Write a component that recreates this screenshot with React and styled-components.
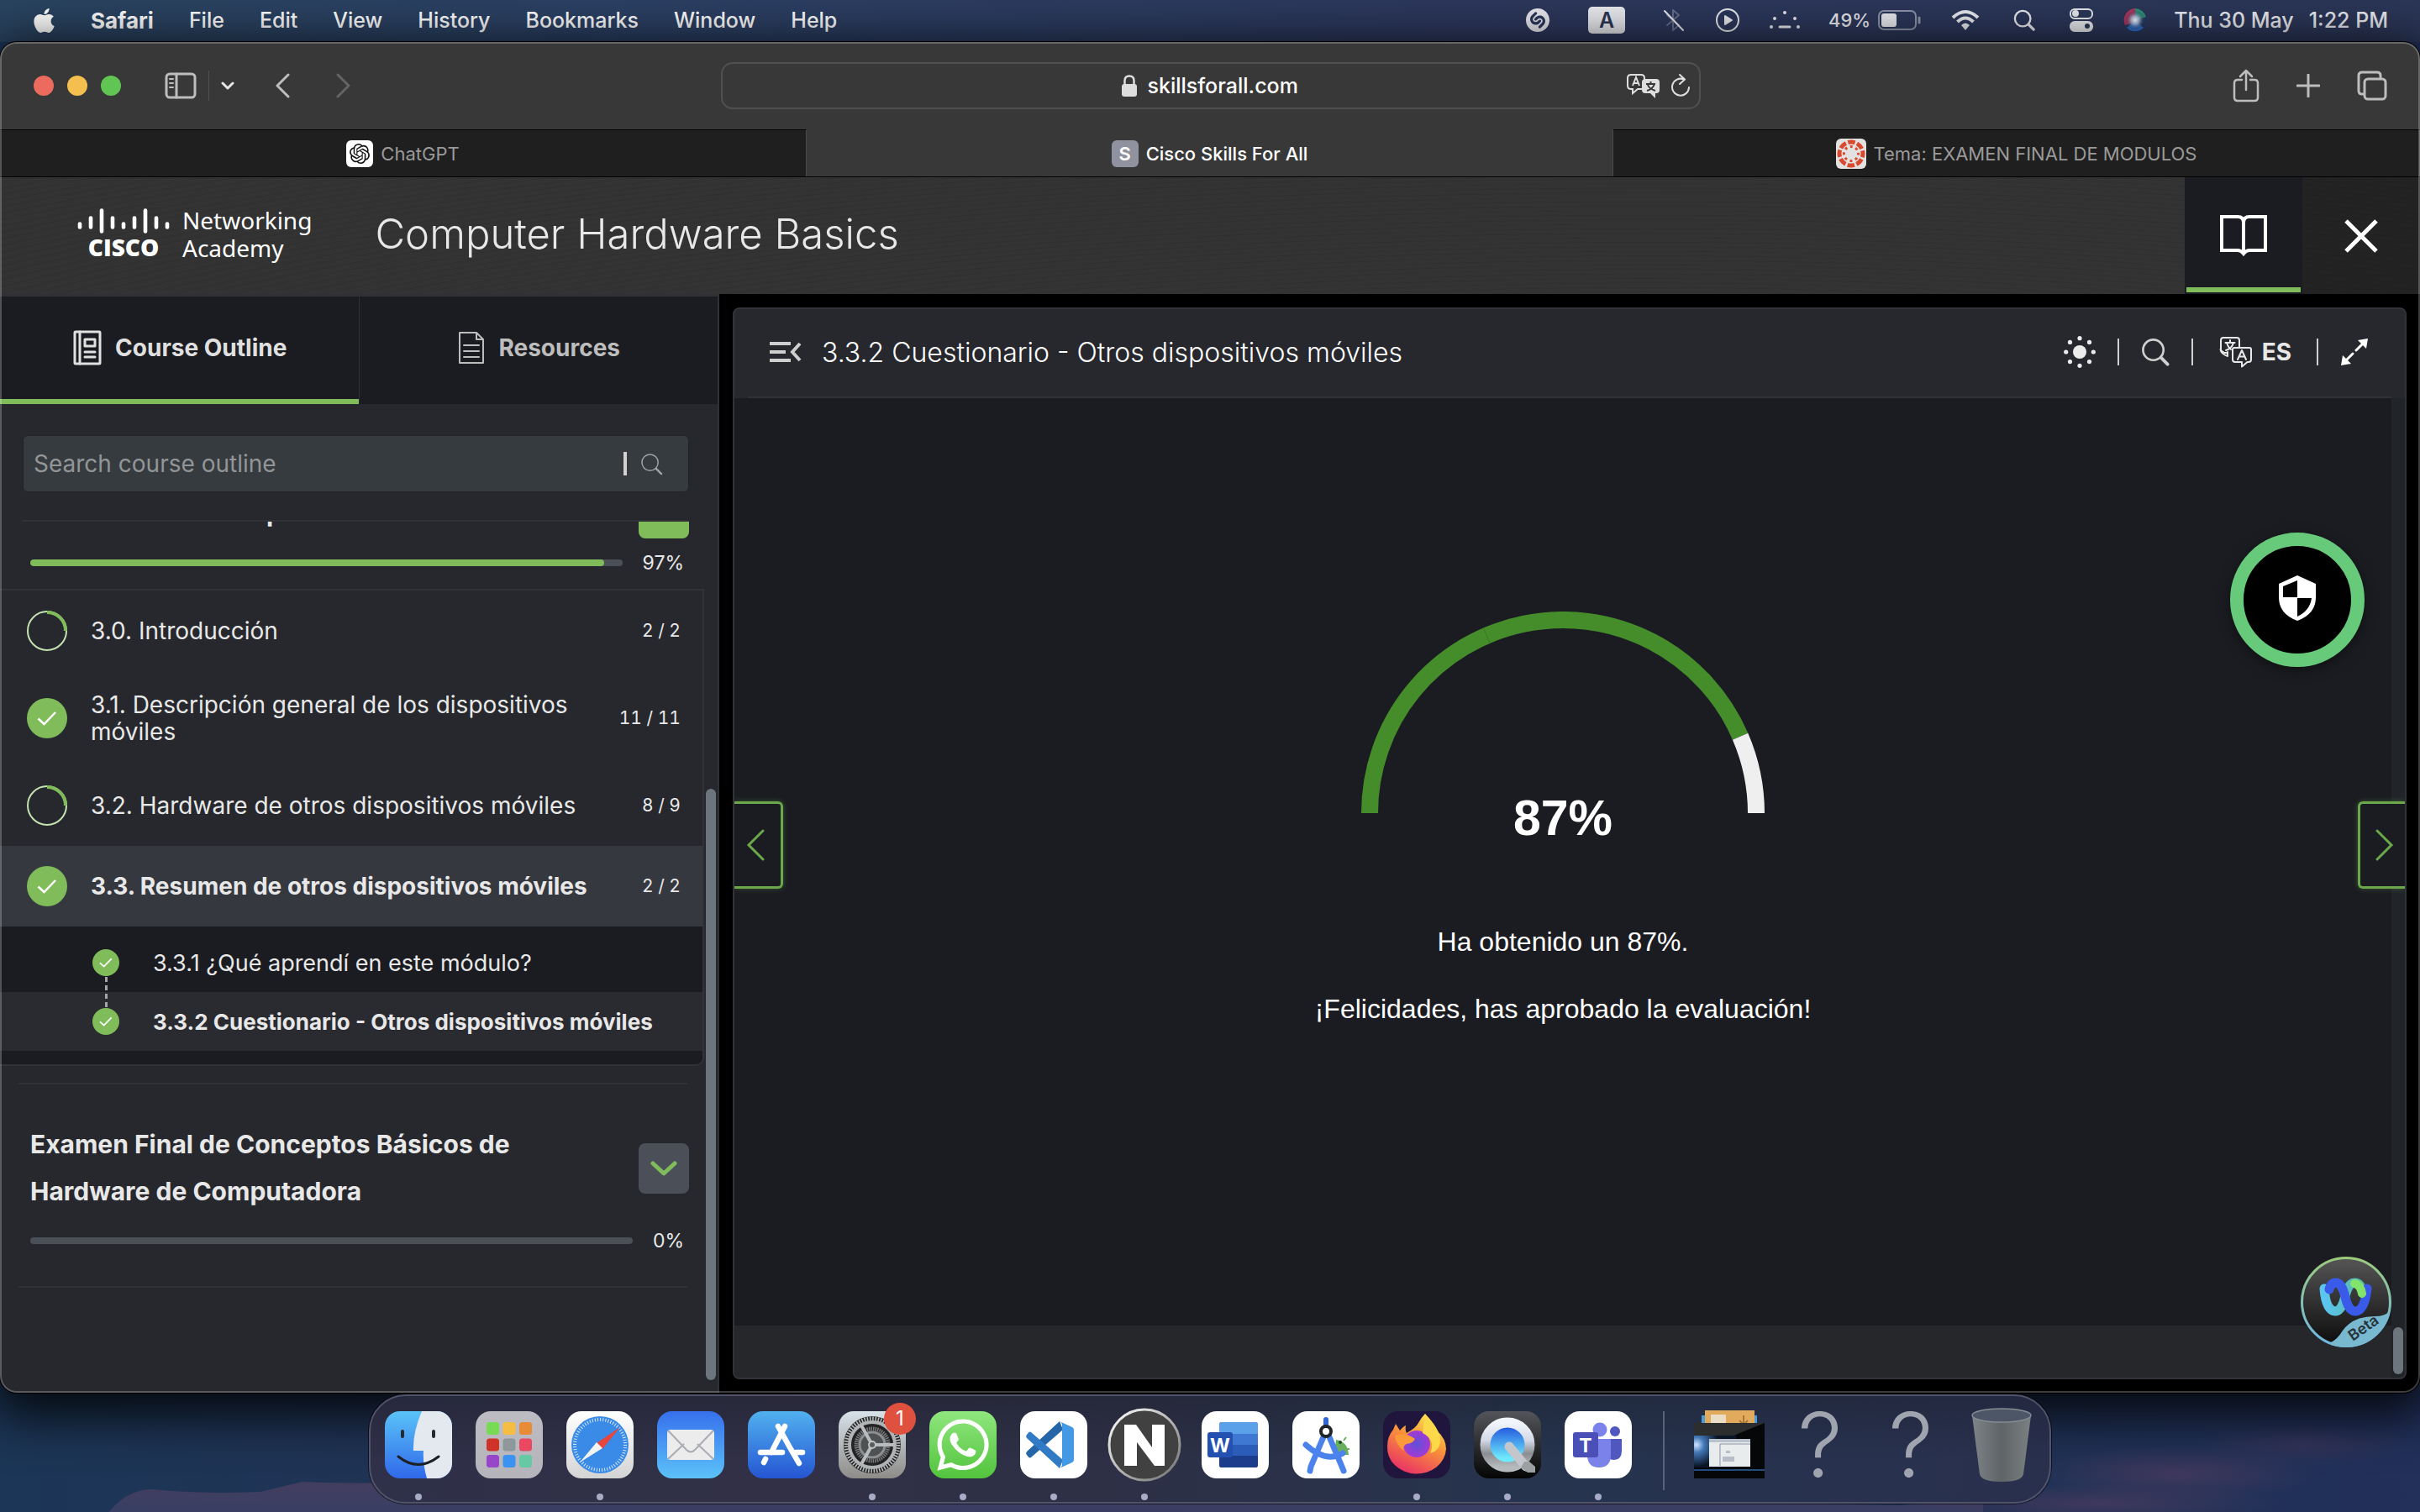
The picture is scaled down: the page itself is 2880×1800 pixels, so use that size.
import React from "react";
import styled, { createGlobalStyle, css } from "styled-components";
import { FaApple, FaWhatsapp } from "react-icons/fa";
import { SiOpenai, SiShazam } from "react-icons/si";

const c = {
  green: "#80bc5a",
  text: "#e8e8e8",
  side: "#27282d",
  dark: "#1b1c21",
  line: "#313237",
  track: "#4b5058",
};

const GlobalStyle = createGlobalStyle`
  *, *::before, *::after { box-sizing: border-box; }
  html, body, #root { height: 100%; }
  body { margin: 0; background: #16243f; font-family: Inter, "Noto Sans", sans-serif; color: ${c.text}; overflow: hidden; }
  svg { display: block; flex: none; }
`;

const reset = css`
  appearance: none;
  border: 0;
  margin: 0;
  padding: 0;
  background: none;
  color: inherit;
  font: inherit;
  text-align: inherit;
  text-decoration: none;
  cursor: pointer;
`;

const IconButton = styled.button`
  ${reset}
  display: flex;
  align-items: center;
  justify-content: center;
  ${(p) => p.$color && `color: ${p.$color};`}
`;

/* ---------- desktop ---------- */

const Desktop = styled.div`
  position: relative;
  isolation: isolate;
  height: 100vh;
  display: flex;
  flex-direction: column;
  background: linear-gradient(90deg, #1c3657 0%, #262f52 40%, #1d3352 70%, #22305a 100%);
`;

const Wallpaper = styled.svg`
  position: absolute;
  z-index: -1;
  left: 0;
  bottom: 0;
  width: 100%;
  height: 150px;
`;

/* ---------- menu bar ---------- */

const MenuBar = styled.header`
  flex: none;
  height: 50px;
  padding: 0 38px 2px 38px;
  display: flex;
  align-items: center;
  justify-content: space-between;
  font-size: 25px;
  font-weight: 500;
  color: #fff;
  background: linear-gradient(90deg, #29435f 0%, #2b4064 25%, #2c375c 60%, #2b3657 100%);
`;

const Menus = styled.nav`
  display: flex;
  align-items: center;
  gap: 42px;
`;

const Menu = styled.button`
  ${reset}
  font-weight: ${(p) => (p.$app ? 700 : 500)};
  font-size: ${(p) => (p.$app ? 26 : 25)}px;
`;

const AppleMenu = styled.button`
  ${reset}
  display: flex;
  justify-content: center;
  width: 28px;
`;

const Status = styled.div`
  display: flex;
  align-items: center;
  gap: 32px;
  color: #e9eaef;
`;

const StatusItem = styled.button`
  ${reset}
  display: flex;
  align-items: center;
  justify-content: center;
  width: ${(p) => (p.$w ? `${p.$w}px` : "auto")};
`;

const InputSource = styled.span`
  width: 44px;
  height: 32px;
  border-radius: 5px;
  background: #e9eaef;
  color: #2b3657;
  font-size: 25px;
  line-height: 32px;
  font-weight: 600;
  text-align: center;
`;

const Battery = styled.button`
  ${reset}
  display: flex;
  align-items: center;
  gap: 9px;
  font-size: 22px;
`;

const Clock = styled.time`
  display: flex;
  gap: 18px;
`;

/* ---------- browser ---------- */

const BrowserWindow = styled.section`
  position: relative;
  flex: 1;
  min-height: 0;
  display: flex;
  flex-direction: column;
  border-radius: 20px;
  overflow: hidden;
  background: #000;
  &::after {
    content: "";
    position: absolute;
    inset: 0;
    border-radius: 20px;
    border: 2px solid rgba(255, 255, 255, 0.24);
    pointer-events: none;
  }
`;

const WindowShade = styled.div`
  flex: 1;
  min-height: 0;
  display: flex;
  flex-direction: column;
  border-radius: 20px;
  box-shadow: 0 0 0 1px #000, 0 16px 60px 12px rgba(0, 0, 0, 0.85);
`;

const Toolbar = styled.div`
  flex: none;
  height: 104px;
  padding: 0 39px 0 40px;
  display: grid;
  grid-template-columns: 1fr minmax(0, 1166px) 1fr;
  align-items: center;
  background: #383838;
`;

const ToolGroup = styled.div`
  display: flex;
  align-items: center;
  justify-content: ${(p) => (p.$end ? "flex-end" : "flex-start")};
  gap: ${(p) => p.$gap}px;
  padding-left: ${(p) => p.$pad || 0}px;
  color: #bdbdbd;
`;

const Light = styled.button`
  ${reset}
  width: 24px;
  height: 24px;
  border-radius: 50%;
  background: ${(p) => p.$color};
`;

const ToolSep = styled.span`
  width: 1px;
  height: 36px;
  background: #505050;
`;

const Address = styled.form`
  height: 56px;
  border: 2px solid #505050;
  border-radius: 14px;
  padding: 0 10px;
  display: grid;
  grid-template-columns: 1fr auto 1fr;
  align-items: center;
`;

const AddressLabel = styled.label`
  grid-column: 2;
  display: flex;
  align-items: center;
  gap: 12px;
`;

const AddressInput = styled.input`
  ${reset}
  width: 182px;
  font-size: 25px;
  font-weight: 500;
  color: #fff;
`;

const AddressActions = styled.div`
  display: flex;
  justify-content: flex-end;
  align-items: center;
  gap: 12px;
  color: #dedede;
`;

const TabStrip = styled.div`
  flex: none;
  height: 57px;
  display: flex;
  background: #383838;
  border-bottom: 1px solid #000;
`;

const BrowserTab = styled.button`
  ${reset}
  flex: 1;
  display: flex;
  align-items: center;
  justify-content: center;
  gap: 9px;
  font-size: 22px;
  font-weight: ${(p) => (p.$active ? 500 : 400)};
  color: ${(p) => (p.$active ? "#fff" : "#9a9a9a")};
  background: ${(p) => (p.$active ? "#383838" : "#1f1f1f")};
  border-top: 1px solid ${(p) => (p.$active ? "#383838" : "#000")};
  border-right: 1px solid #4a4a4a;
`;

const Favicon = styled.span`
  width: 32px;
  height: 32px;
  border-radius: 6px;
  display: flex;
  align-items: center;
  justify-content: center;
  font-size: 22px;
  font-weight: 600;
  color: ${(p) => p.$fg};
  background: ${(p) => p.$bg};
`;

/* ---------- course header ---------- */

const CourseHeader = styled.header`
  flex: none;
  height: 139px;
  display: flex;
  background:
    repeating-radial-gradient(ellipse 70% 300% at 68% 330%, transparent 0, transparent 20px, rgba(0, 0, 0, 0.09) 23px, transparent 26px),
    #333333;
`;

const Brand = styled.div`
  flex: 1;
  min-width: 0;
  display: flex;
  align-items: center;
  padding: 0 0 4px 92px;
`;

const Logo = styled.a`
  ${reset}
  display: flex;
  align-items: center;
  gap: 15px;
  color: #fff;
`;

const LogoMark = styled.span`
  display: flex;
  flex-direction: column;
  align-items: center;
  font: 800 28px/32px "Open Sans", "Noto Sans", sans-serif;
`;

const LogoName = styled.span`
  font: 400 28px/33px "Noto Sans", sans-serif;
`;

const CourseTitle = styled.h1`
  margin: 0 0 0 75px;
  font-size: 49px;
  font-weight: 300;
  line-height: 60px;
`;

const HeaderButton = styled.button`
  ${reset}
  width: 140px;
  display: flex;
  align-items: center;
  justify-content: center;
  color: #fff;
  background: ${(p) => (p.$active ? c.dark : "rgba(0, 0, 0, 0.3)")};
  border: 2px solid ${(p) => (p.$active ? c.dark : "transparent")};
  box-shadow: inset 0 ${(p) => (p.$active ? -6 : 0)}px ${c.green};
`;

const Body = styled.div`
  flex: 1;
  min-height: 0;
  display: flex;
`;

/* ---------- sidebar ---------- */

const Sidebar = styled.aside`
  flex: none;
  width: 856px;
  display: flex;
  flex-direction: column;
  background: ${c.side};
  border-top: 3px solid #303135;
  border-right: 2px solid #303135;
`;

const SideTabs = styled.div`
  flex: none;
  height: 128px;
  display: flex;
  background: ${c.dark};
`;

const SideTab = styled.button`
  ${reset}
  flex: 1;
  display: flex;
  align-items: center;
  justify-content: center;
  gap: 16px;
  padding-left: 2px;
  font-size: 28px;
  font-weight: 700;
  color: ${(p) => (p.$active ? "#e0e0e0" : "#bdbdbd")};
  border-bottom: 6px solid ${(p) => (p.$active ? c.green : "transparent")};
  & + & {
    border-left: 1px solid ${c.line};
  }
`;

const SearchArea = styled.div`
  flex: none;
  padding: 37px 34px 0 26px;
`;

const SearchBox = styled.div`
  height: 68px;
  margin: 0 0 33px 1px;
  padding: 0 30px 0 12px;
  display: flex;
  align-items: center;
  gap: 16px;
  border-radius: 6px;
  background: #363b3f;
  border: 1px solid #222327;
`;

const SearchInput = styled.input`
  ${reset}
  flex: 1;
  min-width: 0;
  font-size: 28px;
  outline: none;
  &::placeholder {
    color: #939596;
    opacity: 1;
  }
`;

const Caret = styled.span`
  width: 4px;
  height: 28px;
  background: #d4d0d0;
`;

const Rule = styled.hr`
  flex: none;
  height: 2px;
  border: 0;
  margin: ${(p) => p.$margin || "0"};
  background: ${c.line};
`;

const Scroller = styled.div`
  flex: 1;
  min-height: 0;
  display: flex;
  overflow: hidden;
`;

const Outline = styled.div`
  flex: 1;
  min-width: 0;
`;

const ScrollTrack = styled.div`
  flex: none;
  width: 16px;
  display: flex;
  padding: ${(p) => p.$pad};
  background: ${(p) => p.$bg || "transparent"};
`;

const ScrollThumb = styled.div`
  flex: 1;
  border-radius: 6px;
  background: #6c747c;
`;

const ModuleBox = styled.section`
  padding: ${(p) => (p.$scrolled ? "0 18px 17px 36px" : "43px 18px 40px 36px")};
  margin-top: ${(p) => (p.$scrolled ? -40 : 0)}px;
`;

const ModuleHead = styled.div`
  display: flex;
  align-items: center;
  gap: 24px;
`;

const ModuleTitle = styled.h2`
  flex: 1;
  margin: 0;
  padding: 0 80px 2px 0;
  font-size: 30px;
  line-height: 56px;
  font-weight: 700;
`;

const ModuleToggle = styled.button`
  ${reset}
  width: 60px;
  height: 60px;
  border-radius: 8px;
  display: flex;
  align-items: center;
  justify-content: center;
  color: ${(p) => (p.$open ? "#fff" : c.green)};
  background: ${(p) => (p.$open ? c.green : c.track)};
`;

const ProgressRow = styled.div`
  display: flex;
  align-items: center;
  gap: 24px;
  height: 28px;
  margin-top: 15px;
  padding-right: 6px;
  font-size: 23px;
`;

const ProgressTrack = styled.div`
  flex: 1;
  height: 8px;
  border-radius: 4px;
  background: ${c.track};
  overflow: hidden;
`;

const ProgressFill = styled.div`
  height: 8px;
  border-radius: 4px;
  background: ${c.green};
`;

const Sections = styled.div`
  border: 2px solid ${c.line};
  border-left: 0;
  border-radius: 0 0 10px 0;
  overflow: hidden;
`;

const SectionRow = styled.button`
  ${reset}
  width: 100%;
  min-height: 96px;
  padding: 24px 26px 24px 32px;
  display: flex;
  align-items: center;
  gap: 28px;
  font-size: 28px;
  line-height: 32px;
  font-weight: ${(p) => (p.$active ? 700 : 400)};
  background: ${(p) => (p.$active ? "#363840" : "transparent")};
`;

const SectionName = styled.span`
  flex: 1;
`;

const SectionCount = styled.span`
  font-size: 21px;
  font-weight: 400;
  font-variant-numeric: tabular-nums;
`;

const Topics = styled.div`
  padding: 8px 0 16px;
  background: ${c.dark};
`;

const Topic = styled.a`
  ${reset}
  height: 70px;
  padding-left: 110px;
  display: flex;
  align-items: center;
  gap: 40px;
  font-size: ${(p) => (p.$active ? 26 : 27)}px;
  font-weight: ${(p) => (p.$active ? 700 : 400)};
  background: ${(p) => (p.$active ? "#2a2b30" : "transparent")};
`;

const TopicMark = styled.span`
  position: relative;
  ${(p) =>
    p.$linked &&
    css`
      &::after {
        content: "";
        position: absolute;
        left: 15px;
        top: 33px;
        height: 36px;
        border-left: 3px dashed #a5a5a8;
      }
    `}
`;

/* ---------- content ---------- */

const Main = styled.main`
  flex: 1;
  min-width: 0;
  padding: 16px;
  display: flex;
  background: #000;
`;

const Panel = styled.section`
  flex: 1;
  min-width: 0;
  display: flex;
  flex-direction: column;
  border: 2px solid #323338;
  border-radius: 8px;
  overflow: hidden;
  background: ${c.side};
`;

const PanelHeader = styled.div`
  flex: none;
  height: 104px;
  padding: 0 43px 2px 42px;
  display: flex;
  align-items: center;
  gap: 24px;
`;

const PanelTitle = styled.h2`
  flex: 1;
  margin: 0;
  font-size: 32px;
  font-weight: 300;
  color: #fff;
`;

const PanelTools = styled.div`
  display: flex;
  align-items: center;
  gap: 26px;
`;

const ToolLine = styled.span`
  width: 2px;
  height: 32px;
  background: #cfcfcf;
`;

const LanguageButton = styled.button`
  ${reset}
  display: flex;
  align-items: center;
  gap: 12px;
  padding: 0 4px;
  font-size: 28px;
  font-weight: 700;
`;

const Stage = styled.div`
  position: relative;
  flex: 1;
  min-height: 0;
  display: flex;
`;

const StageColumn = styled.div`
  flex: 1;
  min-width: 0;
  display: flex;
  flex-direction: column;
`;

const Quiz = styled.div`
  flex: 1;
  display: flex;
  flex-direction: column;
  align-items: center;
  padding-top: 254px;
  background: ${c.dark};
  font-family: "Liberation Sans", Arial, sans-serif;
  color: #fff;
`;

const Score = styled.strong`
  margin: -24px 0 57px;
  font-size: 59px;
  line-height: 60px;
`;

const Message = styled.p`
  margin: 40px 0 0;
  font-size: 32px;
  line-height: 40px;
`;

const StageFooter = styled.div`
  flex: none;
  height: 62px;
  background: #26272b;
`;

const PageButton = styled.button`
  ${reset}
  position: absolute;
  top: 480px;
  ${(p) => p.$side}: 0;
  width: ${(p) => (p.$side === "left" ? 58 : 56)}px;
  height: 104px;
  padding-${(p) => (p.$side === "left" ? "right" : "left")}: 5px;
  display: flex;
  align-items: center;
  justify-content: center;
  color: #6aa84b;
  background: ${c.dark};
  border: 3px solid #6aa84b;
  border-${(p) => p.$side}: 0;
  border-radius: ${(p) => (p.$side === "left" ? "0 6px 6px 0" : "6px 0 0 6px")};
  box-shadow: 0 0 6px rgba(106, 168, 75, 0.4);
`;

const ShieldButton = styled.button`
  ${reset}
  position: absolute;
  right: 48px;
  top: 160px;
  width: 160px;
  height: 160px;
  border: 16px solid #67ca7b;
  border-radius: 50%;
  background: #000;
  display: flex;
  align-items: center;
  justify-content: center;
  padding-bottom: 4px;
  box-shadow: 0 4px 16px rgba(0, 0, 0, 0.4);
`;

const AssistantButton = styled.button`
  ${reset}
  position: absolute;
  right: 16px;
  bottom: 36px;
`;

/* ---------- dock ---------- */

const DockArea = styled.footer`
  position: relative;
  flex: none;
  height: 142px;
  padding: 2px 0 10px;
  display: flex;
  justify-content: center;
`;

const Dock = styled.nav`
  display: flex;
  align-items: flex-start;
  gap: 28px;
  padding: 18px 17px 0;
  border: 2px solid #50536a;
  border-radius: 44px;
  background: linear-gradient(180deg, rgba(20, 22, 30, 0.3), rgba(20, 22, 30, 0) 60%), linear-gradient(90deg, #2f3049 0%, #313046 25%, #2d3046 45%, #26344e 70%, #29304e 100%);
  box-shadow: 0 0 0 1px rgba(0, 0, 0, 0.6);
`;

const DockItem = styled.button`
  ${reset}
  position: relative;
  width: 80px;
  height: 80px;
  display: flex;
  align-items: center;
  justify-content: center;
  ${(p) =>
    p.$running &&
    css`
      &::after {
        content: "";
        position: absolute;
        left: 36px;
        top: 98px;
        width: 8px;
        height: 8px;
        border-radius: 50%;
        background: #a9acc6;
      }
    `}
`;

const DockBadge = styled.span`
  position: absolute;
  right: -12px;
  top: -10px;
  width: 38px;
  height: 38px;
  border-radius: 50%;
  background: #e0503f;
  color: #fff;
  font-size: 24px;
  line-height: 38px;
  text-align: center;
`;

const DockSeparator = styled.span`
  width: 2px;
  height: 94px;
  margin: 0 9px;
  background: #5c617a;
`;

const MissingApp = styled.span`
  font-size: 106px;
  line-height: 80px;
  font-weight: 300;
  color: #a0a4af;
`;

/* ---------- icons ---------- */

const Line = ({ w, h, sw = 3, children, ...rest }) => (
  <svg width={w} height={h} viewBox={`0 0 ${w} ${h}`} fill="none" stroke="currentColor" strokeWidth={sw} strokeLinecap="round" strokeLinejoin="round" aria-hidden="true" {...rest}>
    {children}
  </svg>
);

const Magnifier = ({ size, sw }) => (
  <Line w={size} h={size} sw={sw} viewBox="0 0 28 28">
    <circle cx="12" cy="12" r="10" />
    <path d="M19.5 19.5 26 26" strokeWidth={sw + 1} />
  </Line>
);

const Check = ({ size }) => (
  <svg width={size} height={size} viewBox="0 0 48 48" aria-hidden="true">
    <circle cx="24" cy="24" r="24" fill={c.green} />
    <path d="M13.5 24.5 20.5 31 34 17" fill="none" stroke="#fff" strokeWidth="2.500" />
  </svg>
);

const PartialRing = () => (
  <svg width="48" height="48" viewBox="0 0 48 48" fill="none" aria-hidden="true">
    <circle cx="24" cy="24" r="23" stroke="#c3e2b0" strokeWidth="2" />
    <path d="M24 2a22 22 0 0 1 22 22" stroke={c.green} strokeWidth="4" />
  </svg>
);

const CiscoBars = () => {
  const tops = [[16, 25], [9, 25], [0, 30], [9, 25], [16, 25], [9, 25], [0, 30], [9, 25], [16, 25]];
  return (
    <svg width="110" height="30" viewBox="0 0 110 30" stroke="#fff" strokeWidth="4.600" strokeLinecap="round" aria-hidden="true">
      {tops.map(([a, b], i) => (
        <path key={i} d={`M${3 + i * 13} ${a + 2.5}V${b - 2.5}`} />
      ))}
    </svg>
  );
};

const TranslateLine = () => (
  <Line w={40} h={38} sw={2}>
    <path d="M11 20H7l-4-3V5q0-3 3-3h16q3 0 3 3v8" />
    <path d="M2.500 16q.5 5 8.500 8v-5" />
    <path d="M19 14h18q2 0 2 2v12q0 3-3 3h-1.500l-6.500 5.500V31H20q-3 0-3-3V16q0-2 2-2z" />
    <path d="M8.500 8h11M14 5v3M18 8q-2 7-9 9M10 8q2 6 5 8M23 28l5-11 5 11M25 24.500h6" />
  </Line>
);

const TranslateFilled = () => (
  <svg width="40" height="30" viewBox="0 0 40 30" fill="none" aria-hidden="true">
    <path d="M5 2h12q4 0 4 4v9q0 4-4 4h-4l-6 5v-5H5q-4 0-4-4V6q0-4 4-4z" stroke="#dedede" strokeWidth="2" />
    <path d="m7 15 4-10 4 10M8.500 12h5" stroke="#dedede" strokeWidth="2" />
    <path d="M22 7h13q4 0 4 4v9q0 4-4 4h-1v6l-6-6h-6q-4 0-4-4v-9q0-4 4-4z" fill="#dedede" />
    <path d="M23 13h11M28.500 10v3M33 13q-2 6-9 8M25 14q2 5 9 7" stroke="#383838" strokeWidth="2" />
  </svg>
);

const Gauge = ({ value }) => {
  const at = (r, share) => {
    const a = Math.PI * (1 - share);
    return `${240 + r * Math.cos(a)} ${240 - r * Math.sin(a)}`;
  };
  const arc = (from, to) => `M${at(230, from)}A230 230 0 0 1 ${at(230, to)}`;
  return (
    <svg width="480" height="240" viewBox="0 0 480 240" fill="none" strokeWidth="20" role="img" aria-label={`${value}%`}>
      <path d={arc(0, value / 100)} stroke="#458d2a" />
      <path d={arc(value / 100, 1)} stroke="#efefef" />
      <path d={`M${at(240, 0.371)}L${at(220, 0.371)}`} stroke="#3b7427" strokeWidth="1" />
    </svg>
  );
};

const Tile = ({ id, from, to, children }) => (
  <svg width="80" height="80" viewBox="0 0 80 80" fill="none" aria-hidden="true">
    <defs>
      <linearGradient id={id} x1="0" y1="0" x2="0" y2="1">
        <stop stopColor={from} />
        <stop offset="1" stopColor={to} />
      </linearGradient>
      <clipPath id={`${id}c`}>
        <rect width="80" height="80" rx="18" />
      </clipPath>
    </defs>
    <g clipPath={`url(#${id}c)`}>
      <rect width="80" height="80" fill={`url(#${id})`} />
      {children}
    </g>
  </svg>
);

const FinderIcon = () => (
  <Tile id="finder" from="#5ac3f8" to="#3068ea">
    <path d="M44 0Q33 26 34 47h12q-1 16 4 33h30V0z" fill="#e4e8ef" />
    <path d="M21 24v6M58 24v6" stroke="#25282d" strokeWidth="4" strokeLinecap="round" />
    <path d="M16 54q24 19 48 0" stroke="#1d2024" strokeWidth="3" strokeLinecap="round" />
  </Tile>
);

const LaunchpadIcon = () => {
  const fills = ["#77db55", "#f5bd41", "#e88b37", "#cf3227", "#8e9799", "#ea4861", "#9746ca", "#3a93f0", "#66c9a5"];
  return (
    <Tile id="launch" from="#bcbcc2" to="#b4b4ba">
      {fills.map((f, i) => (
        <rect key={f} x={13 + (i % 3) * 19.5} y={13 + Math.floor(i / 3) * 19.5} width="15" height="15" rx="3.500" fill={f} />
      ))}
    </Tile>
  );
};

const SafariIcon = () => (
  <Tile id="safari" from="#ffffff" to="#d4d4d4">
    <circle cx="40" cy="40" r="34" fill="#3a8ae8" />
    <circle cx="40" cy="40" r="30" stroke="#d7e9fb" strokeWidth="4" strokeDasharray="1 2.140" />
    <path d="M64 19 43 45l-7-7z" fill="#e8453c" />
    <path d="M16 61 36 37l7 7z" fill="#f3f3f3" />
  </Tile>
);

const MailIcon = () => (
  <Tile id="mail" from="#3670ec" to="#5cc2f9">
    <rect x="12" y="22" width="56" height="36" rx="4" fill="#ececec" />
    <path d="m13 57 19-18M67 57 48 39M13 23l22 23q5 5 10 0l22-23" stroke="#a9adb3" strokeWidth="2" />
  </Tile>
);

const AppStoreIcon = () => (
  <Tile id="store" from="#51b1ef" to="#2555d2">
    <path d="M36 18 51 45l10 17M44 18 28 49M21 57l-2 4M15 49h26M57 49h8" stroke="#fff" strokeWidth="6.500" strokeLinecap="round" />
  </Tile>
);

const SettingsIcon = () => (
  <Tile id="settings" from="#d8e2e9" to="#8e8c89">
    <circle cx="40" cy="40" r="34" fill="#232323" />
    <circle cx="40" cy="40" r="31" stroke="#b8bbbd" strokeWidth="5" strokeDasharray="1.600 1.645" />
    <circle cx="40" cy="40" r="27" stroke="#b1b4b6" strokeWidth="4" />
    <circle cx="40" cy="40" r="19" stroke="#77797b" strokeWidth="5" strokeDasharray="1.500 1" />
    <circle cx="40" cy="40" r="15" stroke="#8d9092" strokeWidth="3" fill="#505152" />
    <path d="M40 40h27M40 40 27 17M40 40 27 63" stroke="#b9bcbe" strokeWidth="4" />
    <circle cx="40" cy="40" r="4" fill="#5a5c5e" stroke="#c0c3c5" strokeWidth="2" />
  </Tile>
);

const WhatsAppIcon = () => (
  <Tile id="wa" from="#8fe67e" to="#53c43d">
    <FaWhatsapp x="5" y="5" size={70} color="#fff" />
  </Tile>
);

const CodeIcon = () => (
  <Tile id="code" from="#ffffff" to="#ffffff">
    <path d="m8 48 39-36 4 10-38 33q-2 1-3-.500l-2.500-3q-1-2 .5-3.500z" fill="#2566a8" />
    <path d="m8 32 39 36 4-10-38-33q-2-1-3 .500l-2.500 3q-1 2 .5 3.500z" fill="#317bc6" />
    <path d="M47 12 62 19q2 1 2 3v36q0 2-2 3l-15 7q3-1 3-5V17q0-4-3-5z" fill="#4499e4" />
  </Tile>
);

const NIcon = () => (
  <svg width="88" height="88" viewBox="0 0 88 88" aria-hidden="true">
    <defs>
      <linearGradient id="nring" x1="0" y1="0" x2="1" y2="1">
        <stop stopColor="#fff" />
        <stop offset="1" stopColor="#6f6f6f" />
      </linearGradient>
    </defs>
    <circle cx="44" cy="44" r="42" fill="#414141" stroke="url(#nring)" strokeWidth="3" />
    <path d="M20 69V20h14l19 27V20h15v49H56L35 41v28z" fill="#fff" />
  </svg>
);

const WordIcon = () => (
  <Tile id="word" from="#ffffff" to="#ffffff">
    <rect x="21" y="13" width="46" height="54" rx="3" fill="#2b5cb8" />
    <path d="M24 13h40q3 0 3 3v11H21V16q0-3 3-3z" fill="#5aa1ea" />
    <path d="M21 27h46v13H21z" fill="#3f78d2" />
    <path d="M21 53h46v11q0 3-3 3H24q-3 0-3-3z" fill="#1c3d8c" />
    <rect x="7" y="25" width="30" height="30" rx="3" fill="#2450b2" />
    <text x="22" y="49" textAnchor="middle" fill="#fff" fontFamily="Inter" fontWeight="700" fontSize="23">W</text>
  </Tile>
);

const StudioIcon = () => (
  <Tile id="studio" from="#ffffff" to="#ffffff">
    <path d="M52 34q14 2 15 18H50z" fill="#67ae5d" />
    <circle cx="57" cy="37" r="2" fill="#23472a" />
    <path d="m61 35 3-4M64 45h4" stroke="#67ae5d" strokeWidth="2" />
    <path d="M16 40q24 22 44 10" stroke="#4b82ec" strokeWidth="7" strokeLinecap="round" />
    <path d="M39 26 22 66l-1 5M42 26l17 40 2 5" stroke="#4b82ec" strokeWidth="7" strokeLinecap="round" />
    <path d="M40 10v10" stroke="#2f66de" strokeWidth="6" strokeLinecap="round" />
    <circle cx="40" cy="24" r="6" fill="#fff" stroke="#20242b" strokeWidth="4" />
  </Tile>
);

const FirefoxIcon = () => (
  <Tile id="fox" from="#20153c" to="#20153c">
    <defs>
      <linearGradient id="flame" x1="0.8" y1="0" x2="0.300" y2="1">
        <stop stopColor="#fdec52" />
        <stop offset=".45" stopColor="#f99339" />
        <stop offset="1" stopColor="#e93066" />
      </linearGradient>
      <radialGradient id="globe">
        <stop stopColor="#5f50d8" />
        <stop offset="1" stopColor="#a43ad4" />
      </radialGradient>
    </defs>
    <path d="M50 3q4 12 14 20 11 10 11 22A35 31 0 0 1 5 42q0-12 7-20l3-7 5 8q4-5 7-6-1 6 1 9Q39 20 42 14q3-6 8-11z" fill="url(#flame)" />
    <circle cx="40" cy="39" r="16" fill="url(#globe)" />
    <path d="M14 29q12-5 24 4-2 5-10 6-4 1-4 8-9-8-10-18z" fill="#fa9a38" />
    <path d="M47 26q16 8 9 24 12-3 12-16 0-12-18-31-2 14-3 23z" fill="#fcd94b" />
  </Tile>
);

const QuickTimeIcon = () => (
  <Tile id="qt" from="#53555a" to="#050505">
    <defs>
      <linearGradient id="qring" x1="0" y1="0" x2="0" y2="1">
        <stop stopColor="#f2f5fc" />
        <stop offset=".4" stopColor="#d3d9e6" />
        <stop offset=".7" stopColor="#8a8e92" />
        <stop offset="1" stopColor="#b7babd" />
      </linearGradient>
      <linearGradient id="qglass" x1="0" y1="0" x2="0" y2="1">
        <stop offset=".1" stopColor="#235ae0" />
        <stop offset=".8" stopColor="#6fe9fb" />
      </linearGradient>
    </defs>
    <circle cx="40" cy="40" r="26.500" fill="url(#qglass)" stroke="url(#qring)" strokeWidth="12" />
    <path d="M42 42 62 66" stroke="#c3c6ca" strokeWidth="11" strokeLinecap="round" />
    <path d="M60 60h6l7 6v7h-9l-8-6z" fill="#9da0a3" />
  </Tile>
);

const TeamsIcon = () => (
  <Tile id="teams" from="#ffffff" to="#ffffff">
    <circle cx="60" cy="24" r="6" fill="#5058c0" />
    <circle cx="42" cy="22" r="8.500" fill="#7b83ea" />
    <path d="M48 33h20v14q0 11-9 11t-11-10z" fill="#5058c0" />
    <path d="M27 33h28v19q0 15-14 15T27 52z" fill="#7b83ea" />
    <rect x="10" y="25" width="30" height="30" rx="3" fill="#4b50b8" />
    <text x="25" y="49" textAnchor="middle" fill="#fff" fontFamily="Inter" fontWeight="700" fontSize="23">T</text>
  </Tile>
);

const StackIcon = () => (
  <svg width="86" height="86" viewBox="0 0 86 86" aria-hidden="true">
    <defs>
      <radialGradient id="glow" gradientUnits="userSpaceOnUse" cx="4" cy="43" r="26">
        <stop stopColor="#cfe4ff" />
        <stop offset=".35" stopColor="#4478b8" />
        <stop offset="1" stopColor="#0a1526" />
      </radialGradient>
    </defs>
    <path d="M10 8h66v14H10z" fill="#4a9bd8" />
    <path d="M14 2h59v20H14z" fill="#e2aa5c" />
    <path d="M21 7h18v12H21z" fill="#eadfc6" />
    <path d="M60 8v10m-5-4 5 5 5-5" stroke="#a87734" strokeWidth="2" fill="none" />
    <path d="M1 17h84v66H1z" fill="#050709" />
    <path d="M1 24h50v46H1z" fill="url(#glow)" />
    <path d="M1 17h84L48 32H1z" fill="#2b2d2f" />
    <path d="M19 36h49v33H19z" fill="#e9ecec" />
    <path d="M19 36h49v4H19z" fill="#b9c1cc" />
    <path d="M32 42h36M32 42v26" stroke="#8b93a4" strokeWidth="1" fill="none" />
    <path d="M35 57h14v6H35zm4-7h5v3h-5z" fill="#b8bec8" />
    <path d="M1 72h84v2H1z" fill="#234b7c" />
  </svg>
);

const TrashIcon = () => (
  <svg width="74" height="90" viewBox="0 0 74 90" aria-hidden="true">
    <defs>
      <linearGradient id="can" x1="0" y1="0" x2="1" y2="0">
        <stop stopColor="#7d8387" />
        <stop offset=".5" stopColor="#5f6467" />
        <stop offset="1" stopColor="#7b8083" />
      </linearGradient>
    </defs>
    <path d="M2 10 11 80q2 9 26 9t26-9l9-70z" fill="url(#can)" />
    <ellipse cx="37" cy="10" rx="35" ry="8" fill="#4d5666" stroke="#858c94" strokeWidth="1.500" />
  </svg>
);

const AssistantIcon = () => (
  <svg width="108" height="108" viewBox="0 0 108 108" fill="none" aria-hidden="true">
    <defs>
      <linearGradient id="rim" x1="0" y1="0" x2="0" y2="1">
        <stop stopColor="#9ccb7c" />
        <stop offset="1" stopColor="#6fb7e4" />
      </linearGradient>
      <linearGradient id="orb" x1="0" y1="0" x2="0" y2="1">
        <stop stopColor="#555" />
        <stop offset="1" stopColor="#0c0c0c" />
      </linearGradient>
      <linearGradient id="wave" x1="0" y1="0" x2="1" y2="0">
        <stop stopColor="#5cc6f2" />
        <stop offset="1" stopColor="#57b8a6" />
      </linearGradient>
      <clipPath id="disc">
        <circle cx="54" cy="54" r="54" />
      </clipPath>
    </defs>
    <circle cx="54" cy="54" r="52.500" fill="url(#orb)" stroke="url(#rim)" strokeWidth="3" />
    <path d="M36 102q8-4 14-14 12-17 38-17 13 0 17-6l10 50H36z" fill="#78b9cf" clipPath="url(#disc)" />
    <path d="M28 38q2 26 13 27 8 0 12-18 4-16 11-16 7 0 9 9" stroke="url(#wave)" strokeWidth="11" strokeLinecap="round" />
    <path d="M79 38q-3 27-14 27-8 0-12-17-4-17-11-17-6 0-8 8" stroke="#3a5bea" strokeWidth="11" strokeLinecap="round" />
    <path d="M64 32q7 1 9 12" stroke="#82e46c" strokeWidth="10" strokeLinecap="round" />
    <text transform="translate(62 101) rotate(-35)" fill="#273238" fontFamily="Inter" fontWeight="600" fontSize="18">Beta</text>
  </svg>
);

/* ---------- data ---------- */

const menus = ["File", "Edit", "View", "History", "Bookmarks", "Window", "Help"];

const sections = [
  { name: "3.0. Introducción", count: "2 / 2" },
  { name: "3.1. Descripción general de los dispositivos móviles", count: "11 / 11", done: true },
  { name: "3.2. Hardware de otros dispositivos móviles", count: "8 / 9" },
  { name: "3.3. Resumen de otros dispositivos móviles", count: "2 / 2", done: true, active: true },
];

const apps = [
  { name: "Finder", icon: <FinderIcon />, running: true },
  { name: "Launchpad", icon: <LaunchpadIcon /> },
  { name: "Safari", icon: <SafariIcon />, running: true },
  { name: "Mail", icon: <MailIcon /> },
  { name: "App Store", icon: <AppStoreIcon /> },
  { name: "System Settings", icon: <SettingsIcon />, running: true, badge: 1 },
  { name: "WhatsApp", icon: <WhatsAppIcon />, running: true },
  { name: "Visual Studio Code", icon: <CodeIcon />, running: true },
  { name: "N", icon: <NIcon />, running: true },
  { name: "Word", icon: <WordIcon /> },
  { name: "Android Studio", icon: <StudioIcon /> },
  { name: "Firefox", icon: <FirefoxIcon />, running: true },
  { name: "QuickTime Player", icon: <QuickTimeIcon />, running: true },
  { name: "Teams", icon: <TeamsIcon />, running: true },
];

/* ---------- parts ---------- */

function Progress({ value, label }) {
  return (
    <ProgressRow>
      <ProgressTrack role="progressbar" aria-valuenow={value} aria-label={label}>
        <ProgressFill style={{ width: `${value}%` }} />
      </ProgressTrack>
      <span>{value}%</span>
    </ProgressRow>
  );
}

function Module({ title, value, open, scrolled }) {
  return (
    <ModuleBox $scrolled={scrolled}>
      <ModuleHead>
        <ModuleTitle>{title}</ModuleTitle>
        <ModuleToggle $open={open} aria-label={title} aria-expanded={!!open}>
          <Line w={32} h={20} sw={5}>
            <path d={open ? "M3 17 16 4l13 13" : "M3 4l13 12L29 4"} />
          </Line>
        </ModuleToggle>
      </ModuleHead>
      <Progress value={value} label={title} />
    </ModuleBox>
  );
}

function SystemBar() {
  return (
    <MenuBar>
      <Menus>
        <AppleMenu aria-label="Apple">
          <FaApple size={33} />
        </AppleMenu>
        <Menu $app>Safari</Menu>
        {menus.map((m) => (
          <Menu key={m}>{m}</Menu>
        ))}
      </Menus>
      <Status>
        <StatusItem $w={36} aria-label="Shazam"><SiShazam size={28} /></StatusItem>
        <StatusItem $w={64}><InputSource>A</InputSource></StatusItem>
        <StatusItem $w={32} aria-label="Bluetooth">
          <Line w={26} h={28} sw={2}>
            <path d="M5 8l14 12-7 6V2l7 6L5 20" stroke="#646d8b" />
            <path d="M2 3l22 23" />
          </Line>
        </StatusItem>
        <StatusItem $w={32} aria-label="Play">
          <Line w={28} h={28} sw={2}>
            <circle cx="14" cy="14" r="13" />
            <path d="M11 9v10l8-5z" fill="currentColor" />
          </Line>
        </StatusItem>
        <StatusItem $w={40} aria-label="Keyboard">
          <Line w={38} h={22} sw={4}>
            <path d="M19 2h0M7 9h0M31 9h0M3 19h0M35 19h0" />
            <path d="M13 19h12" strokeWidth="3" />
          </Line>
        </StatusItem>
        <Battery>
          49%
          <Line w={52} h={24} sw={2}>
            <rect x="1" y="1" width="44" height="22" rx="6" stroke="#8e94aa" />
            <rect x="4" y="4" width="18" height="16" rx="3" fill="currentColor" stroke="none" />
            <path d="M49 9v6" stroke="#8e94aa" strokeWidth="3" />
          </Line>
        </Battery>
        <StatusItem $w={40} aria-label="Wi-Fi">
          <Line w={34} h={26} sw={4} strokeLinecap="butt">
            <path d="M2 10q15-14 30 0M7.500 15q9.500-9 19 0" />
            <path d="M12 19q5-5 10 0l-5 6z" fill="currentColor" stroke="none" />
          </Line>
        </StatusItem>
        <StatusItem $w={36} aria-label="Search"><Magnifier size={26} sw={2.5} /></StatusItem>
        <StatusItem $w={36} aria-label="Control Centre">
          <Line w={28} h={28} sw={2}>
            <rect x="1" y="1" width="26" height="11" rx="5" />
            <circle cx="7" cy="6" r="3" fill="currentColor" />
            <rect x="1" y="16" width="26" height="11" rx="5" fill="currentColor" />
            <circle cx="21" cy="21" r="3" fill="#2b3657" stroke="none" />
          </Line>
        </StatusItem>
        <StatusItem $w={28} aria-label="Siri">
          <svg width="28" height="28" viewBox="0 0 28 28" aria-hidden="true">
            <defs>
              <radialGradient id="siri">
                <stop stopColor="#fff" />
                <stop offset=".4" stopColor="#b4c8e6" stopOpacity=".8" />
                <stop offset="1" stopColor="#10203c" stopOpacity="0" />
              </radialGradient>
            </defs>
            <circle cx="14" cy="14" r="14" fill="#26375f" />
            <path d="M14 0a14 14 0 0 0-12 20q8-2 12-6z" fill="#b0355e" />
            <path d="M14 0a14 14 0 0 1 13 10l-13 5z" fill="#2f8f77" />
            <path d="M4 23a14 14 0 0 0 20 0l-10-9z" fill="#2f6cc8" />
            <circle cx="14" cy="14" r="12" fill="url(#siri)" />
          </svg>
        </StatusItem>
        <Clock>
          <span>Thu 30 May</span>
          <span>1:22 PM</span>
        </Clock>
      </Status>
    </MenuBar>
  );
}

function BrowserChrome() {
  return (
    <>
      <Toolbar>
        <ToolGroup $gap={16}>
          <Light $color="#ec6a5e" aria-label="Close" />
          <Light $color="#f4bf4f" aria-label="Minimise" />
          <Light $color="#61c554" aria-label="Zoom" />
          <ToolGroup $gap={14} $pad={36}>
            <IconButton aria-label="Sidebar">
              <Line w={38} h={32}>
                <rect x="2" y="2" width="34" height="28" rx="4" />
                <path d="M14 2v28" />
                <path d="M6 8h4M6 13h4M6 18h4" strokeWidth="2" />
              </Line>
            </IconButton>
            <ToolSep />
            <IconButton aria-label="Tab groups" $color="#e6e6e6">
              <Line w={16} h={10}>
                <path d="m2 2 6 6 6-6" />
              </Line>
            </IconButton>
          </ToolGroup>
          <ToolGroup $gap={55} $pad={32}>
            <IconButton aria-label="Back">
              <Line w={18} h={30}><path d="M16 2 3 15l13 13" /></Line>
            </IconButton>
            <IconButton aria-label="Forward" $color="#646464">
              <Line w={18} h={30}><path d="m2 2 13 13L2 28" /></Line>
            </IconButton>
          </ToolGroup>
        </ToolGroup>
        <Address onSubmit={(e) => e.preventDefault()}>
          <AddressLabel>
            <svg width="20" height="26" viewBox="0 0 20 26" fill="#dedede" aria-hidden="true">
              <rect x="1" y="11" width="18" height="15" rx="3" />
              <path d="M4.500 12V7q0-5.500 5.500-5.500T15.500 7v5" fill="none" stroke="#dedede" strokeWidth="2.500" />
            </svg>
            <AddressInput aria-label="Address" defaultValue="skillsforall.com" />
          </AddressLabel>
          <AddressActions>
            <IconButton type="button" aria-label="Translate"><TranslateFilled /></IconButton>
            <IconButton type="button" aria-label="Reload">
              <Line w={24} h={28} sw={2}>
                <path d="M16 6.500a10 10 0 1 0 6 9.500M11 1l6 5.500-6 5.500" />
              </Line>
            </IconButton>
          </AddressActions>
        </Address>
        <ToolGroup $gap={44} $end>
          <IconButton aria-label="Share">
            <Line w={32} h={40}>
              <path d="M11 13H6q-4 0-4 4v17q0 4 4 4h20q4 0 4-4V17q0-4-4-4h-5M16 25V3M9 9l7-7 7 7" strokeWidth="2.500" />
            </Line>
          </IconButton>
          <IconButton aria-label="New tab">
            <Line w={28} h={28}><path d="M14 1v26M1 14h26" /></Line>
          </IconButton>
          <IconButton aria-label="Tab overview">
            <Line w={36} h={36}>
              <path d="M8 28H6q-4 0-4-4V6q0-4 4-4h18q4 0 4 4v2" />
              <rect x="9" y="10" width="25" height="24" rx="4" />
            </Line>
          </IconButton>
        </ToolGroup>
      </Toolbar>
      <TabStrip>
        <BrowserTab>
          <Favicon $bg="#fff" $fg="#111"><SiOpenai size={24} /></Favicon>
          ChatGPT
        </BrowserTab>
        <BrowserTab $active>
          <Favicon $bg="#9192a0" $fg="#fff">S</Favicon>
          Cisco Skills For All
        </BrowserTab>
        <BrowserTab>
          <svg width="36" height="36" viewBox="0 0 36 36" aria-hidden="true">
            <rect width="36" height="36" rx="6" fill="#e4e2e0" />
            <circle cx="18" cy="18" r="14" fill="none" stroke="#d9482f" strokeWidth="5" strokeDasharray="8.500 2.500" strokeDashoffset="4.250" />
            <circle cx="18" cy="18" r="8.500" fill="none" stroke="#d9482f" strokeWidth="3" strokeDasharray="3 3.680" strokeDashoffset="1.500" />
          </svg>
          Tema: EXAMEN FINAL DE MODULOS
        </BrowserTab>
      </TabStrip>
    </>
  );
}

function CourseSidebar() {
  return (
    <Sidebar>
      <SideTabs>
        <SideTab $active>
          <Line w={34} h={42} sw={3}>
            <rect x="2" y="2" width="30" height="38" rx="1" />
            <path d="M8 2v38M14 11h12v8H14zM14 26h12M14 32h12" />
          </Line>
          Course Outline
        </SideTab>
        <SideTab>
          <Line w={32} h={40} sw={2}>
            <path d="M2 2h20l8 8v28H2zM22 2v8h8M7 17h18M7 24h18M7 31h18" />
          </Line>
          Resources
        </SideTab>
      </SideTabs>
      <SearchArea>
        <SearchBox>
          <SearchInput type="text" aria-label="Search course outline" placeholder="Search course outline" />
          <Caret />
          <IconButton aria-label="Search" $color="#a3a4a5"><Magnifier size={27} sw={1.5} /></IconButton>
        </SearchBox>
        <Rule />
      </SearchArea>
      <Scroller>
        <Outline>
          <Module title="Introducción de dispositivos móviles" value={97} open scrolled />
          <Sections>
            {sections.map((s) => (
              <SectionRow key={s.name} $active={s.active}>
                {s.done ? <Check size={48} /> : <PartialRing />}
                <SectionName>{s.name}</SectionName>
                <SectionCount>{s.count}</SectionCount>
              </SectionRow>
            ))}
            <Topics>
              <Topic href="#331">
                <TopicMark $linked><Check size={32} /></TopicMark>
                3.3.1 ¿Qué aprendí en este módulo?
              </Topic>
              <Topic href="#332" $active>
                <TopicMark><Check size={32} /></TopicMark>
                3.3.2 Cuestionario - Otros dispositivos móviles
              </Topic>
            </Topics>
          </Sections>
          <Rule $margin="20px 20px 0 22px" />
          <Module title="Examen Final de Conceptos Básicos de Hardware de Computadora" value={0} />
          <Rule $margin="0 20px 0 22px" />
        </Outline>
        <ScrollTrack $pad="318px 2px 15px">
          <ScrollThumb />
        </ScrollTrack>
      </Scroller>
    </Sidebar>
  );
}

function Lesson() {
  const dots = Array.from({ length: 8 }, (_, i) => (i * Math.PI) / 4);
  return (
    <Main>
      <Panel>
        <PanelHeader>
          <IconButton aria-label="Toggle outline" $color="#cfcfcf">
            <Line w={38} h={24} sw={4} strokeLinecap="butt">
              <path d="M0 2h25M0 12h19M0 22h25M36 2l-9 10 9 10" strokeLinejoin="miter" />
            </Line>
          </IconButton>
          <PanelTitle>3.3.2 Cuestionario - Otros dispositivos móviles</PanelTitle>
          <PanelTools>
            <IconButton aria-label="Theme">
              <svg width="38" height="38" viewBox="0 0 38 38" fill="#ececec" aria-hidden="true">
                <circle cx="19" cy="19" r="8" />
                {dots.map((a) => (
                  <circle key={a} cx={19 + 16.3 * Math.cos(a)} cy={19 + 16.3 * Math.sin(a)} r="2.600" />
                ))}
              </svg>
            </IconButton>
            <ToolLine />
            <IconButton aria-label="Search" $color="#cfcfcf"><Magnifier size={34} sw={2.2} /></IconButton>
            <ToolLine />
            <LanguageButton>
              <TranslateLine />
              ES
            </LanguageButton>
            <ToolLine />
            <IconButton aria-label="Full screen" $color="#fff">
              <Line w={34} h={34}>
                <path d="M19 15 28 6M15 19 6 28" />
                <path d="M33 1l-2 12L21 3zM1 33l2-12 10 10z" fill="#fff" strokeWidth="0" />
              </Line>
            </IconButton>
          </PanelTools>
        </PanelHeader>
        <Rule $margin="0 16px" />
        <Stage>
          <StageColumn>
            <Quiz>
              <Gauge value={87} />
              <Score>87%</Score>
              <Message>Ha obtenido un 87%.</Message>
              <Message>¡Felicidades, has aprobado la evaluación!</Message>
            </Quiz>
            <StageFooter />
          </StageColumn>
          <ScrollTrack $bg="#21252a" $pad="1106px 2px 4px">
            <ScrollThumb />
          </ScrollTrack>
          <PageButton $side="left" aria-label="Previous">
            <Line w={22} h={38} strokeLinejoin="miter"><path d="M20 2 3 19l17 17" /></Line>
          </PageButton>
          <PageButton $side="right" aria-label="Next">
            <Line w={22} h={38} strokeLinejoin="miter"><path d="m2 2 17 17L2 36" /></Line>
          </PageButton>
          <ShieldButton aria-label="Security">
            <svg width="44" height="54" viewBox="0 0 44 54" aria-hidden="true">
              <path d="M22 0 44 10v16q0 20-22 28Q0 46 0 26V10z" fill="#fff" />
              <path d="M22 6v20H5V13zM22 27h17q-2 15-17 22z" fill="#000" />
            </svg>
          </ShieldButton>
          <AssistantButton aria-label="Assistant"><AssistantIcon /></AssistantButton>
        </Stage>
      </Panel>
    </Main>
  );
}

export default function App() {
  return (
    <Desktop>
      <GlobalStyle />
      <Wallpaper viewBox="0 0 2880 150" preserveAspectRatio="none" aria-hidden="true">
        <defs>
          <linearGradient id="ridge" x1="0" y1="0" x2="0" y2="1">
            <stop stopColor="#4d4060" />
            <stop offset="1" stopColor="#3f4168" />
          </linearGradient>
          <radialGradient id="haze">
            <stop stopColor="#483a5e" stopOpacity=".8" />
            <stop offset="1" stopColor="#483a5e" stopOpacity="0" />
          </radialGradient>
        </defs>
        <path d="M130 150q20-26 50-27 60 6 130 3l50-12q90 4 200-2 400 20 800 26l600-2 300 6 100-8v16z" fill="url(#ridge)" opacity=".8" />
        <ellipse cx="2590" cy="104" rx="170" ry="34" fill="url(#haze)" />
        <ellipse cx="2740" cy="70" rx="130" ry="26" fill="url(#haze)" opacity=".6" />
        <ellipse cx="2500" cy="140" rx="220" ry="24" fill="url(#haze)" />
      </Wallpaper>
      <SystemBar />
      <WindowShade>
        <BrowserWindow>
          <BrowserChrome />
          <CourseHeader>
            <Brand>
              <Logo href="#home">
                <LogoMark>
                  <CiscoBars />
                  CISCO
                </LogoMark>
                <LogoName>
                  Networking
                  <br />
                  Academy
                </LogoName>
              </Logo>
              <CourseTitle>Computer Hardware Basics</CourseTitle>
            </Brand>
            <HeaderButton $active aria-label="Course">
              <Line w={58} h={52} sw={4} strokeLinejoin="miter">
                <path d="M29 47q-3-4-7-4H3V3h19q7 0 7 7 0-7 7-7h19v40H36q-4 0-7 4zM29 9v38" />
              </Line>
            </HeaderButton>
            <HeaderButton aria-label="Close">
              <Line w={42} h={42} sw={5}><path d="m3 3 36 36M39 3 3 39" strokeLinecap="butt" /></Line>
            </HeaderButton>
          </CourseHeader>
          <Body>
            <CourseSidebar />
            <Lesson />
          </Body>
        </BrowserWindow>
      </WindowShade>
      <DockArea>
        <Dock aria-label="Dock">
          {apps.map((a) => (
            <DockItem key={a.name} $running={a.running} aria-label={a.name}>
              {a.icon}
              {a.badge && <DockBadge>{a.badge}</DockBadge>}
            </DockItem>
          ))}
          <DockSeparator />
          <DockItem aria-label="Downloads"><StackIcon /></DockItem>
          <DockItem><MissingApp>?</MissingApp></DockItem>
          <DockItem><MissingApp>?</MissingApp></DockItem>
          <DockItem aria-label="Trash"><TrashIcon /></DockItem>
        </Dock>
      </DockArea>
    </Desktop>
  );
}
